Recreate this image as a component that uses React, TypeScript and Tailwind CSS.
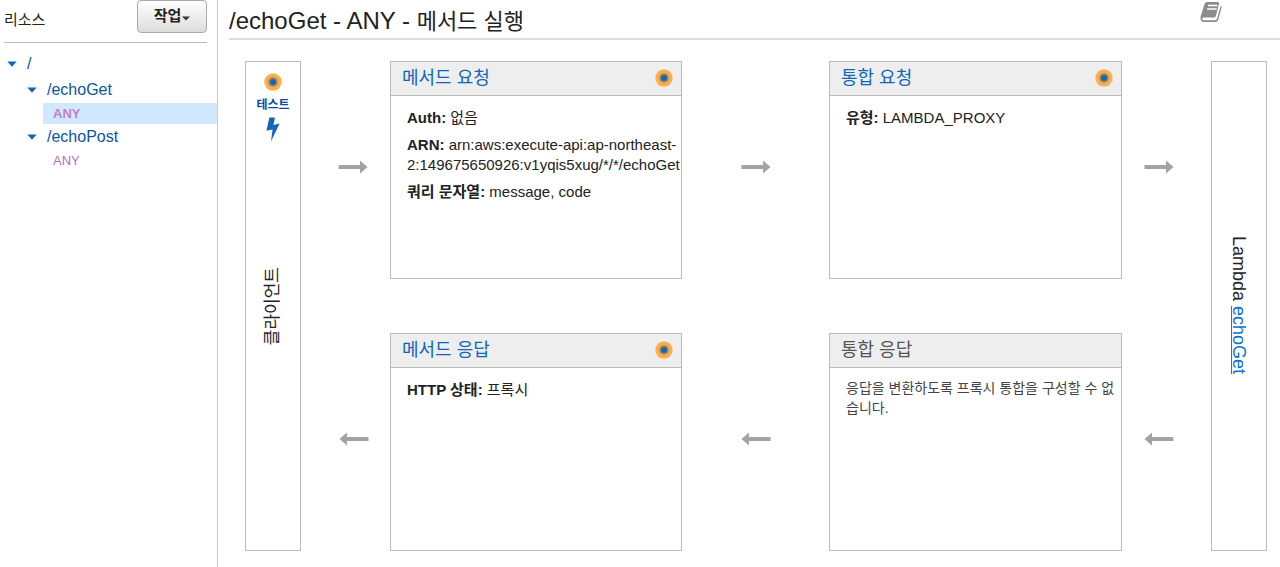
import React from "react";

function Target() {
  return (
    <svg viewBox="0 0 18 18" className="size-[18px] shrink-0" aria-hidden="true">
      <circle cx="9" cy="9" r="8.7" fill="#fbb04f" />
      <circle cx="9" cy="9" r="5" fill="#b08a55" />
      <circle cx="9" cy="9" r="3" fill="#1166bb" />
    </svg>
  );
}

function Bolt() {
  return (
    <svg viewBox="0 0 14 25" className="h-[25px] w-3.5" aria-hidden="true">
      <path d="M3.4 0.5H9L7.4 8L13.6 6.6L5 24.5L6.6 12.4L0.4 13.8Z" fill="#1166bb" />
    </svg>
  );
}

function Book() {
  return (
    <svg viewBox="0 0 22 22" className="size-[22px]" aria-hidden="true">
      <path d="M7.4 1H17.8Q19.6 1 19.1 2.8L15.8 15Q15.4 16.6 13.8 16.6H3.6Q2.2 16.6 2.2 17.6Q2.2 19.2 4 19.2H15.2Q16.6 19.2 17 17.8L20.5 5.4L20.9 4.6Q21.9 5.4 21.5 6.8L18.3 18.4Q17.6 20.9 15.2 20.9H4Q0.6 20.9 0.5 17.2Q0.4 16 0.9 14.6L4.4 3.4Q5.2 1 7.4 1Z" fill="#8c8c8c" />
      <path d="M8 4.5H17.4M7.1 7.9H16.5" stroke="#fff" strokeWidth="1.5" />
    </svg>
  );
}

function Arrow({ left = false }: { left?: boolean }) {
  return (
    <svg viewBox="0 0 30 14" className="h-3.5 w-[30px]" aria-hidden="true">
      <path
        d={left ? "M0.5 7L8 0.5V5H29.5V9H8V13.5Z" : "M29.5 7L22 0.5V5H0.5V9H22V13.5Z"}
        fill="#a3a3a3"
      />
    </svg>
  );
}

function Triangle() {
  return (
    <svg viewBox="0 0 10 6" className="h-1.5 w-2.5" aria-hidden="true">
      <path d="M0.3 0.5H9.7L5 5.8Z" fill="#1166bb" />
    </svg>
  );
}

function Card({
  title,
  linked = true,
  children,
}: {
  title: string;
  linked?: boolean;
  children: React.ReactNode;
}) {
  return (
    <section className="min-h-[218px] min-w-0 overflow-hidden border border-[#bbb]">
      <header className="flex h-[34px] items-center justify-between border-b border-[#bbb] bg-[#eee] pr-2 pb-0.5 pl-[11px]">
        <h2 className="text-lg leading-6">
          {linked ? (
            <a href="#" className="text-[#1166bb]">{title}</a>
          ) : (
            <span className="text-[#555]">{title}</span>
          )}
        </h2>
        {linked && <Target />}
      </header>
      <div className="flex flex-col gap-[7px] pt-3 pl-4 text-[15px] leading-5">{children}</div>
    </section>
  );
}

function TreeNode({ name }: { name: string }) {
  return (
    <button className="flex h-[26px] items-center text-base text-[#0b559f]">
      <Triangle />
      <span className="pl-2.5">{name}</span>
    </button>
  );
}

export default function App() {
  return (
    <div className="flex min-h-screen bg-white font-['Liberation_Sans','Noto_Sans_CJK_KR',sans-serif] text-[#222]">
      <aside className="w-[218px] shrink-0 border-r border-[#ccc]">
        <div className="mr-2.5 ml-1 flex h-[43px] items-start justify-between border-b border-[#bbb]">
          <h2 className="pt-2.5 text-[15px] leading-5">리소스</h2>
          <button className="flex h-[33px] w-[70px] items-center justify-center gap-px rounded border border-[#aaa] bg-linear-to-b from-white to-[#ddd] text-[15px] font-bold">
            작업
            <svg viewBox="0 0 8 5" className="mt-1 h-[5px] w-2" aria-hidden="true">
              <path d="M0 0.5H8L4 4.5Z" fill="#333" />
            </svg>
          </button>
        </div>
        <nav className="flex flex-col pt-2">
          <div className="pl-[7px]"><TreeNode name="/" /></div>
          <div className="pl-[27px]"><TreeNode name="/echoGet" /></div>
          <a href="#" className="ml-[43px] bg-[#d1e8ff] pl-2.5 text-[13px] leading-[21px] font-bold text-[#c07fcb]">ANY</a>
          <div className="pl-[27px]"><TreeNode name="/echoPost" /></div>
          <a href="#" className="ml-[43px] pl-2.5 text-[13px] leading-[21px] text-[#b070bd]">ANY</a>
        </nav>
      </aside>

      <main className="flex min-w-0 flex-1 flex-col">
        <header className="ml-[11px] flex h-10 items-start justify-between border-b-2 border-[#ddd] pr-[58px]">
          <h1 className="pt-1.5 text-2xl leading-[30px]">
            /echoGet - ANY - <span className="text-[22px]">메서드 실행</span>
          </h1>
          <button aria-label="문서" className="pt-px"><Book /></button>
        </header>

        <div className="grid flex-1 grid-cols-[56px_minmax(0,89fr)_minmax(0,292fr)_minmax(0,147fr)_minmax(0,293fr)_minmax(0,89fr)_56px] grid-rows-2 gap-y-[54px] pt-[21px] pr-[13px] pb-4 pl-[27px]">
          <section className="row-span-2 grid justify-items-center border border-[#bbb]">
            <button className="col-start-1 row-start-1 flex flex-col items-center self-start pt-[11px] text-xs font-bold text-[#0b4a9f]">
              <Target />
              <span className="pt-1 pb-0.5 leading-5">테스트</span>
              <Bolt />
            </button>
            <span className="col-start-1 row-start-1 rotate-180 self-center text-[17px] leading-6 [text-orientation:sideways] [writing-mode:vertical-rl]">
              클라이언트
            </span>
          </section>

          <div className="flex items-center justify-center pb-1.5 pl-3.5"><Arrow /></div>
          <Card title="메서드 요청">
            <p><b>Auth:</b> 없음</p>
            <p className="whitespace-nowrap"><b>ARN:</b> arn:aws:execute-api:ap-northeast-<br />2:149675650926:v1yqis5xug/*/*/echoGet</p>
            <p><b>쿼리 문자열:</b> message, code</p>
          </Card>
          <div className="flex items-center justify-center pb-1.5"><Arrow /></div>
          <Card title="통합 요청">
            <p><b>유형:</b> LAMBDA_PROXY</p>
          </Card>
          <div className="flex items-center justify-center pr-4 pb-1.5"><Arrow /></div>

          <section className="col-start-7 row-span-2 row-start-1 flex items-center justify-center border border-[#bbb] pb-0.5">
            <p className="text-lg leading-6 [text-orientation:sideways] [writing-mode:vertical-rl]">
              Lambda <a href="#" className="text-[#0972d3] underline">echoGet</a>
            </p>
          </section>

          <div className="col-start-2 row-start-2 flex items-center justify-center pb-1.5 pl-4"><Arrow left /></div>
          <Card title="메서드 응답">
            <p><b>HTTP 상태:</b> 프록시</p>
          </Card>
          <div className="flex items-center justify-center pb-1.5"><Arrow left /></div>
          <Card title="통합 응답" linked={false}>
            <p className="-mt-0.5 text-sm leading-5 text-[#444]">응답을 변환하도록 프록시 통합을 구성할 수 없습니다.</p>
          </Card>
          <div className="flex items-center justify-center pr-4 pb-1.5"><Arrow left /></div>
        </div>
      </main>
    </div>
  );
}
